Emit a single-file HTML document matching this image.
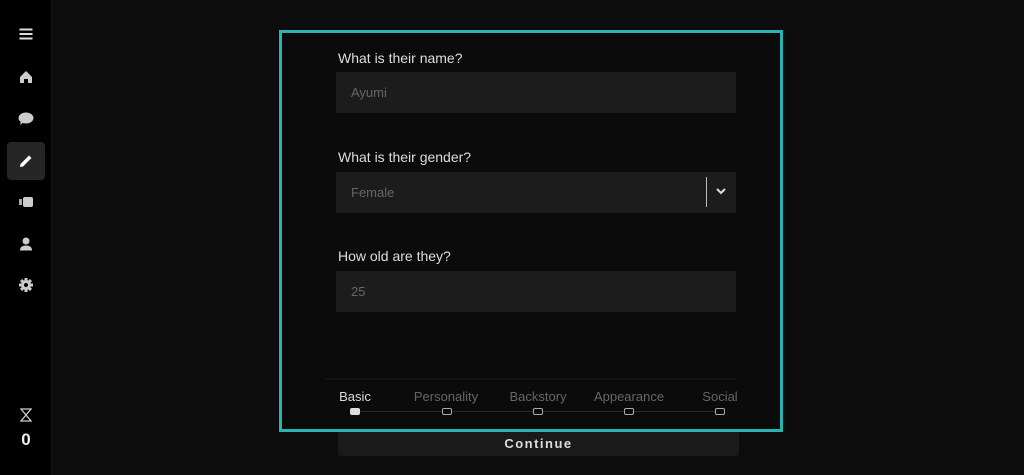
<!DOCTYPE html>
<html><head><style>
*{margin:0;padding:0;box-sizing:border-box}
body{width:1024px;height:475px;background:#0c0c0c;font-family:"Liberation Sans",sans-serif;position:relative;overflow:hidden;color:#ddd}
.side{position:absolute;left:0;top:0;width:52px;height:475px;background:#000;border-right:1px solid #151515}
.ic{position:absolute;left:26px;transform:translate(-50%,-50%)}
.sel{position:absolute;left:7px;top:142px;width:38px;height:38px;background:#262626;border-radius:4px}
.box{position:absolute;left:279px;top:30px;width:504px;height:402px;border:3px solid #2ab3b3;background:#0b0b0b}
.lbl{position:absolute;left:338px;font-size:14px;color:#ddd}
.inp{position:absolute;left:336px;width:400px;height:41px;background:#1c1c1c;color:#666;font-size:13px;padding:0 0 0 15px;line-height:41px}
.step{position:absolute;top:389px;font-size:13px;color:#666;transform:translateX(-50%)}
.dot{position:absolute;top:408px;width:10px;height:7px;border:1.5px solid #aaa;border-radius:2px;background:#0b0b0b;transform:translateX(-50%)}
</style></head><body>
<div class="side">
<svg class="ic" style="top:34px" width="13" height="11" viewBox="0 0 13 11"><rect y="0" width="13" height="2" fill="#ddd"/><rect y="4.5" width="13" height="2" fill="#ddd"/><rect y="9" width="13" height="2" fill="#ddd"/></svg>
<svg class="ic" style="top:77px" width="14" height="14" viewBox="0 0 14 14"><path d="M7 1 L13 7 V13 H9 V9 H5 V13 H1 V7 Z" fill="#ccc"/></svg>
<svg class="ic" style="top:119px" width="16" height="14" viewBox="0 0 16 14"><ellipse cx="8" cy="6" rx="7.5" ry="5.5" fill="#ccc"/><path d="M3 9 L2 13 L6 10Z" fill="#ccc"/></svg>
<div class="sel"></div>
<svg class="ic" style="top:161px" width="14" height="14" viewBox="0 0 14 14"><path d="M1 13 L1.5 10 L10 1.5 L12.5 4 L4 12.5Z" fill="#fff"/></svg>
<svg class="ic" style="top:202px" width="14" height="12" viewBox="0 0 14 12"><rect x="0" y="3" width="3" height="6" fill="#aaa"/><rect x="4" y="1" width="10" height="10" rx="2" fill="#ccc"/></svg>
<svg class="ic" style="top:244px" width="14" height="15" viewBox="0 0 14 15"><circle cx="7" cy="4.5" r="3.5" fill="#ccc"/><path d="M1 14 Q1 9 7 9 Q13 9 13 14Z" fill="#ccc"/></svg>
<svg class="ic" style="top:285px" width="14" height="14" viewBox="0 0 14 14"><g fill="#ccc"><circle cx="7" cy="7" r="5"/><rect x="5.5" y="0" width="3" height="14"/><rect x="0" y="5.5" width="14" height="3"/><rect x="5.5" y="0" width="3" height="14" transform="rotate(45 7 7)"/><rect x="5.5" y="0" width="3" height="14" transform="rotate(-45 7 7)"/></g><circle cx="7" cy="7" r="2" fill="#000"/></svg>
<svg class="ic" style="top:415px" width="12" height="14" viewBox="0 0 12 14"><path d="M1 1 H11 L6 7 L11 13 H1 L6 7 Z" fill="none" stroke="#ccc" stroke-width="1.3"/></svg>
<div class="ic" style="top:440px;font-size:17px;font-weight:bold;color:#eee">0</div>
</div>
<div class="box"></div>
<div class="lbl" style="top:50px">What is their name?</div>
<div class="inp" style="top:72px">Ayumi</div>
<div class="lbl" style="top:149px">What is their gender?</div>
<div class="inp" style="top:172px">Female</div>
<div style="position:absolute;left:706px;top:177px;width:1px;height:30px;background:#bbb"></div>
<svg style="position:absolute;left:716px;top:188px" width="10" height="7" viewBox="0 0 10 7"><path d="M1 1 L5 5 L9 1" fill="none" stroke="#ddd" stroke-width="2"/></svg>
<div class="lbl" style="top:248px">How old are they?</div>
<div class="inp" style="top:271px">25</div>
<div style="position:absolute;left:326px;top:378px;width:410px;height:2px;background:#141414"></div>
<div style="position:absolute;left:355px;top:411px;width:366px;height:1px;background:#2a2a2a"></div>
<div class="step" style="left:355px;color:#ddd">Basic</div>
<div class="step" style="left:446px">Personality</div>
<div class="step" style="left:538px">Backstory</div>
<div class="step" style="left:629px">Appearance</div>
<div class="step" style="left:720px">Social</div>
<div class="dot" style="left:355px;background:#ddd;border-color:#ddd"></div>
<div class="dot" style="left:447px"></div>
<div class="dot" style="left:538px"></div>
<div class="dot" style="left:629px"></div>
<div class="dot" style="left:720px"></div>
<div style="position:absolute;left:338px;top:432px;width:401px;height:24px;background:#1a1a1a;border-radius:0 0 3px 3px;text-align:center;line-height:24px;font-size:13px;font-weight:bold;letter-spacing:1.5px;color:#ddd">Continue</div>
</body></html>
